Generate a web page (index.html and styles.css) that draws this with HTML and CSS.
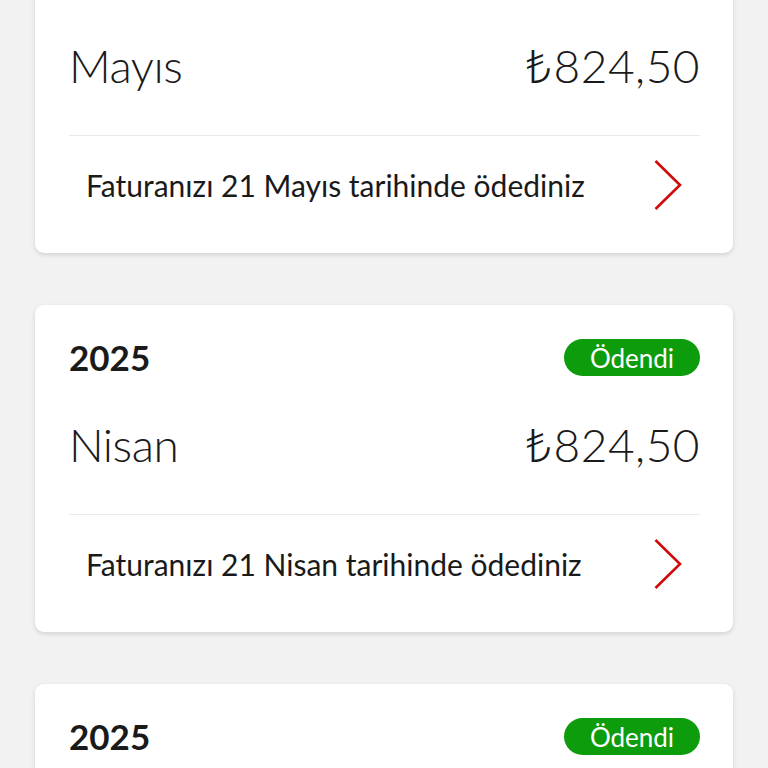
FILE: index.html
```html
<!doctype html>
<html lang="tr">
  <head>
    <meta charset="UTF-8" />
    <meta name="viewport" content="width=device-width, initial-scale=1.0" />
    <title>Faturalarım</title>
    <link rel="stylesheet" href="styles.css">
  </head>
  <body>
    <div class="bill-list">
      <div class="bill-card">
        <div class="bill-head">
          <span class="bill-year">2025</span>
          <span class="badge">Ödendi</span>
        </div>
        <div class="bill-main">
          <span class="bill-month">Mayıs</span>
          <span class="bill-amount"><span class="currency">₺</span>824,50</span>
        </div>
        <a class="bill-foot" href="#">
          <span>Faturanızı 21 Mayıs tarihinde ödediniz</span>
          <svg class="chevron" viewBox="0 0 28 50" width="28" height="50">
            <path d="M1.5 1 L26 25 L1.5 49" fill="none" stroke="#d20a0a" stroke-width="2.6" />
          </svg>
        </a>
      </div>

      <div class="bill-card">
        <div class="bill-head">
          <span class="bill-year">2025</span>
          <span class="badge">Ödendi</span>
        </div>
        <div class="bill-main">
          <span class="bill-month">Nisan</span>
          <span class="bill-amount"><span class="currency">₺</span>824,50</span>
        </div>
        <a class="bill-foot" href="#">
          <span>Faturanızı 21 Nisan tarihinde ödediniz</span>
          <svg class="chevron" viewBox="0 0 28 50" width="28" height="50">
            <path d="M1.5 1 L26 25 L1.5 49" fill="none" stroke="#d20a0a" stroke-width="2.6" />
          </svg>
        </a>
      </div>

      <div class="bill-card">
        <div class="bill-head">
          <span class="bill-year">2025</span>
          <span class="badge">Ödendi</span>
        </div>
        <div class="bill-main">
          <span class="bill-month">Mart</span>
          <span class="bill-amount"><span class="currency">₺</span>824,50</span>
        </div>
        <a class="bill-foot" href="#">
          <span>Faturanızı 21 Mart tarihinde ödediniz</span>
          <svg class="chevron" viewBox="0 0 28 50" width="28" height="50">
            <path d="M1.5 1 L26 25 L1.5 49" fill="none" stroke="#d20a0a" stroke-width="2.6" />
          </svg>
        </a>
      </div>
    </div>
  </body>
</html>
```

FILE: styles.css
```css
:root {
  --page: #f2f2f2;
  --card: #ffffff;
  --text: #1a1a1a;
  --line: #e9e9e9;
  --green: #0c9c0c;
}
body {
  margin: 0;
  padding: 0;
  background-color: var(--page);
  font-family: Lato, "Open Sans", "Noto Sans", "DejaVu Sans", sans-serif;
  color: var(--text);
  overflow: hidden;
}

.bill-list {
  display: flex;
  flex-direction: column;
  gap: 52px;
  padding: 0 35px;
  margin-top: -74px;
}

.bill-card {
  background-color: var(--card);
  border-radius: 9px;
  box-shadow: 0 2px 5px rgba(0, 0, 0, 0.13);
  padding: 34px 33px 0 34px;
}

.bill-head {
  display: flex;
  justify-content: space-between;
  align-items: center;
  height: 37px;
}
.bill-year {
  font-size: 35px;
  font-weight: 700;
  line-height: 1;
}
.badge {
  background-color: var(--green);
  color: white;
  border-radius: 20px;
  width: 136px;
  height: 37px;
  display: flex;
  justify-content: center;
  align-items: center;
  font-size: 26px;
  line-height: 1;
}

.bill-main {
  display: flex;
  justify-content: space-between;
  align-items: baseline;
  font-weight: 300;
  font-size: 46px;
  line-height: 46px;
  height: 46px;
  padding: 46px 0 46px;
  border-bottom: 1.5px solid var(--line);
}
.bill-month {
  letter-spacing: -0.5px;
}
.bill-amount {
  letter-spacing: 0.5px;
}
.currency {
  font-family: "Noto Sans", "DejaVu Sans", sans-serif;
  font-weight: 300;
  line-height: 20px;
  margin-right: 1px;
}

.bill-foot {
  display: flex;
  justify-content: space-between;
  align-items: center;
  padding: 24px 18px 43px 17px;
  font-size: 30px;
  color: var(--text);
  text-decoration: none;
}
.chevron {
  display: block;
}
```
